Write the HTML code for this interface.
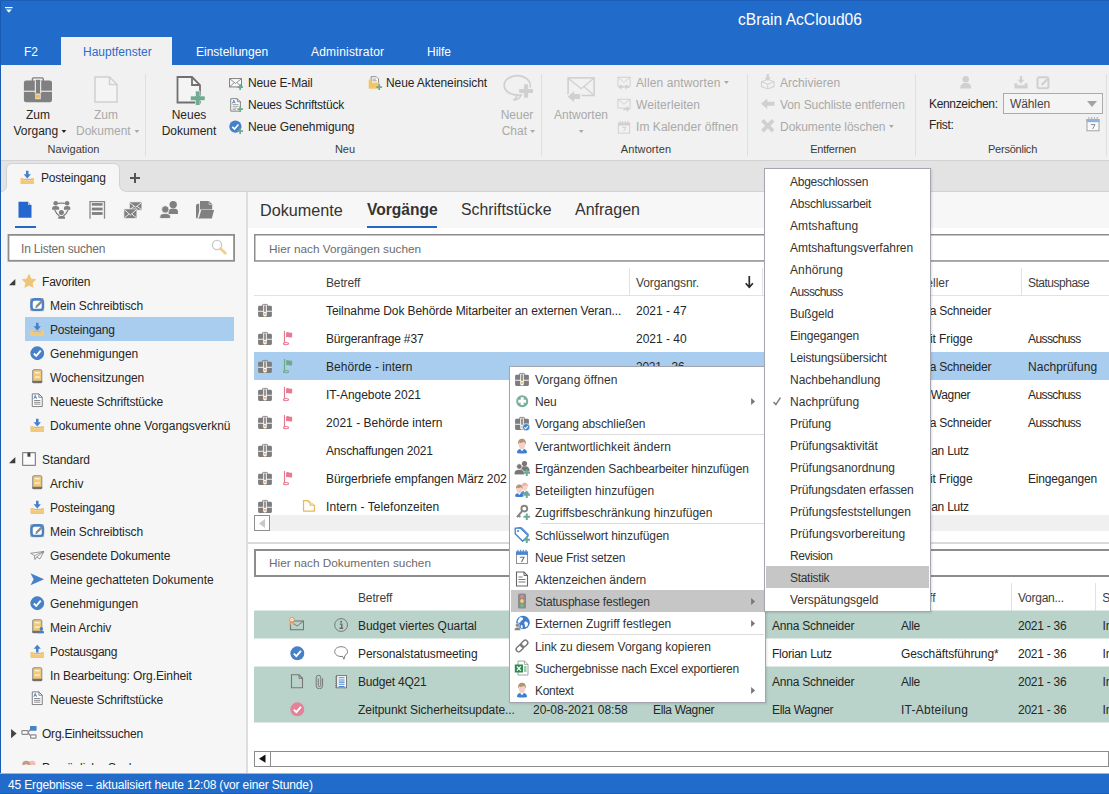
<!DOCTYPE html><html><head><meta charset="utf-8"><title>F2</title><style>
*{box-sizing:border-box;margin:0;padding:0}
html,body{width:1109px;height:794px;overflow:hidden;background:#fff}
body{font-family:"Liberation Sans",sans-serif;font-size:12px;color:#262626;position:relative}
.a{position:absolute;white-space:nowrap}
.t{position:absolute;white-space:nowrap;line-height:14px;height:14px}
.c{transform:translateX(-50%)}
.dis{color:#a9a9a9}
svg{position:absolute;overflow:visible}
.sep{position:absolute;width:1px;background:#dfdfdf;top:74px;height:82px}
.w{color:#fff}
svg.ar{position:static;display:inline-block;margin-left:3.500px}
</style></head><body><svg width="0" height="0" style="position:absolute"><defs><symbol id="brief" viewBox="0 0 16 16"><path d="M5.600 4V3q0-.6.6-.6h3.600q.6 0 .6.6V4" fill="none" stroke="#7d7d7d" stroke-width=".9"/><rect x="1.100" y="3.700" width="13.800" height="11.200" rx="1.300" fill="#7d7d7d"/><rect x="1.100" y="8.800" width="13.800" height=".9" fill="#fff"/><path d="M6.200 3.400h3.600v9.500q0 1.700-1.800 1.700t-1.800-1.700z" fill="#fbfbfb"/><rect x="7.200" y="3.500" width="1.600" height="6.300" fill="#7d7d7d"/><rect x="7" y="11" width="2" height="1.900" fill="#f4bf62"/></symbol><symbol id="briefcheck" viewBox="0 0 16 16"><path d="M5.600 4V3q0-.6.6-.6h3.600q.6 0 .6.6V4" fill="none" stroke="#7d7d7d" stroke-width=".9"/><rect x="1.100" y="3.700" width="13.800" height="11.200" rx="1.300" fill="#7d7d7d"/><rect x="1.100" y="8.800" width="13.800" height=".9" fill="#fff"/><path d="M6.200 3.400h3.600v9.500q0 1.700-1.800 1.700t-1.800-1.700z" fill="#fbfbfb"/><rect x="7.200" y="3.500" width="1.600" height="6.300" fill="#7d7d7d"/><rect x="7" y="11" width="2" height="1.900" fill="#f4bf62"/><circle cx="12.2" cy="12.2" r="3.6" fill="#4580c8" stroke="#fff" stroke-width=".6"/><path d="M10.4 12.3l1.3 1.3 2.3-2.6" stroke="#fff" stroke-width="1.1" fill="none"/></symbol><symbol id="briefbig" viewBox="0 0 30 28"><path d="M9.400 6V3q0-1.100 1.100-1.100h8.600q1.100 0 1.100 1.100V6" fill="#f1f1f1" stroke="#808080" stroke-width="1.400"/><rect x=".9" y="4.600" width="28.100" height="21.700" rx="2.200" fill="#808080"/><rect x=".9" y="14.700" width="28.100" height="1.100" fill="#f1f1f1"/><path d="M11.800 4.600h6.400V17.500h-6.400z" fill="#f1f1f1"/><rect x="12.900" y="3.800" width="4.200" height="13.700" fill="#808080"/><rect x="12.300" y="17.800" width="5.400" height="5.400" fill="#f1f1f1"/><rect x="13" y="18.400" width="4" height="4.200" fill="#f0bf68"/></symbol><symbol id="docbigdis" viewBox="0 0 24 27"><path d="M1 1h14.5L23 8.500V26H1z" fill="#f4f4f4" stroke="#d0d0d0" stroke-width="1.5"/><path d="M15.500 1V8.500H23" fill="none" stroke="#d0d0d0" stroke-width="1.5"/></symbol><symbol id="newdocbig" viewBox="0 0 30 29"><path d="M1.5 1h14.500L24 9V26.500H1.500z" fill="#f4f4f4" stroke="#707070" stroke-width="1.8"/><path d="M16 1V9H24" fill="none" stroke="#707070" stroke-width="1.8"/><path d="M19.500 15h4.500v5h5v4.500h-5v5h-4.500v-5h-5V20h5z" fill="#6fab92" stroke="#f1f1f1" stroke-width=".6"/></symbol><symbol id="mailplus" viewBox="0 0 16 16"><rect x=".7" y="3" width="13.600" height="9.500" fill="#fafafa" stroke="#707070" stroke-width="1"/><path d="M1 3.300l6.500 5.200 6.500-5.200M1 12.300l4.800-4.600M14 12.300L9.200 7.700" fill="none" stroke="#707070" stroke-width=".9"/><path d="M11.75 9.5h2v2.25h2.25v2h-2.25v2.25h-2v-2.25h-2.25v-2h2.25z" fill="#6fab92"/></symbol><symbol id="docplus" viewBox="0 0 16 16"><path d="M2 .8h7.500L13 4.300V15H2z" fill="#fff" stroke="#707070" stroke-width="1"/><path d="M9.500 .8V4.300H13" fill="none" stroke="#707070" stroke-width=".9"/><path d="M4 6.200L5.500 2.500 7 6.200M4.500 5h2" stroke="#4580c8" stroke-width="1" fill="none"/><path d="M4 7.500h7M4 9.500h7M4 11.500h5M4 13.300h4" stroke="#707070" stroke-width=".7"/><path d="M11.75 9.5h2v2.25h2.25v2h-2.25v2.25h-2v-2.25h-2.25v-2h2.25z" fill="#6fab92"/></symbol><symbol id="checkplus" viewBox="0 0 16 16"><circle cx="7.300" cy="7.500" r="7" fill="#4580c8"/><path d="M3.800 7.800l2.500 2.500 4.500-5.200" stroke="#fff" stroke-width="1.900" fill="none"/><path d="M11.75 9.5h2v2.25h2.25v2h-2.25v2.25h-2v-2.25h-2.25v-2h2.25z" fill="#6fab92"/></symbol><symbol id="folderplus" viewBox="0 0 16 16"><path d="M3.500 .8h6l2.500 2.500V10h-8.500z" fill="#fff" stroke="#707070" stroke-width=".9"/><path d="M5 3.500h4M5 5.500h5" stroke="#707070" stroke-width=".8"/><path d="M.8 4h2.500v3.500H13.500L12 14.500H.8z" fill="#f3c56b"/><path d="M11.75 9.5h2v2.25h2.25v2h-2.25v2.25h-2v-2.25h-2.25v-2h2.25z" fill="#6fab92"/></symbol><symbol id="chatbigdis" viewBox="0 0 32 30"><path d="M15 20.900c-.3 2.600-1.700 4.300-3.600 5.300 3.700 0 6.300-2 7.800-5.200" fill="none" stroke="#d0d0d0" stroke-width="1.700"/><ellipse cx="15.200" cy="11.300" rx="13" ry="9.700" fill="none" stroke="#d0d0d0" stroke-width="1.800"/><path d="M21.400 9.700h5.400v4.600h4.900v5.400h-4.900v4.600h-5.400v-4.600h-4.900v-5.400h4.900z" fill="#d0d0d0" stroke="#f1f1f1" stroke-width="1.300"/></symbol><symbol id="replybigdis" viewBox="0 0 33 28"><rect x="3.100" y="1.900" width="26" height="17.600" fill="none" stroke="#d0d0d0" stroke-width="1.600"/><path d="M3.600 2.400l12.500 10.300L28.600 2.400M18.800 10.500l9.800 8.500" fill="none" stroke="#d0d0d0" stroke-width="1.300"/><path d="M1.500 20.600l8.300-7.200v4h6v6.400h-6v4z" fill="#d0d0d0" stroke="#f1f1f1" stroke-width="1.400"/></symbol><symbol id="replyalldis" viewBox="0 0 16 16"><rect x="1" y="1.500" width="14" height="10" fill="none" stroke="#d0d0d0" stroke-width="1.100"/><path d="M1.300 1.800l6.700 5.400 6.700-5.400" fill="none" stroke="#d0d0d0" stroke-width="1"/><path d="M1 12.500l4-3.500v2.200h3v2.600H5V16zM7.500 12.500l4-3.500v2.200h3v2.600h-3V16z" fill="#d0d0d0" stroke="#f1f1f1" stroke-width=".5"/></symbol><symbol id="forwarddis" viewBox="0 0 16 16"><rect x="1" y="1.500" width="14" height="10" fill="none" stroke="#d0d0d0" stroke-width="1.100"/><path d="M1.300 1.800l6.700 5.400 6.700-5.400" fill="none" stroke="#d0d0d0" stroke-width="1"/><path d="M15.500 12.500l-4.500-3.800v2.400H7v2.800h4V16z" fill="#d0d0d0" stroke="#f1f1f1" stroke-width=".5"/></symbol><symbol id="caldis" viewBox="0 0 16 16"><rect x="1.500" y="3.500" width="13" height="11.500" fill="none" stroke="#d0d0d0" stroke-width="1.100"/><rect x="1.500" y="3.500" width="13" height="2.800" fill="#d0d0d0"/><path d="M3.500 1v3M6.500 1v3M9.500 1v3M12.500 1v3" stroke="#d0d0d0" stroke-width="1.200"/><path d="M6 8.500h4L7.500 13" fill="none" stroke="#d0d0d0" stroke-width="1.100"/></symbol><symbol id="archdis" viewBox="0 0 16 16"><path d="M8 5.500L1.500 8v5L8 15.500 14.500 13V8z" fill="none" stroke="#d0d0d0" stroke-width="1.100"/><path d="M1.500 8L8 10.500 14.500 8M8 10.500v5" fill="none" stroke="#d0d0d0" stroke-width="1"/><path d="M6.800 0h2.400v3.500h2L8 7 4.800 3.500h2z" fill="#d0d0d0"/></symbol><symbol id="leftarrdis" viewBox="0 0 16 16"><path d="M1 8l6.500-5.500v3.500H15v4H7.500v3.500z" fill="#d0d0d0"/></symbol><symbol id="xdis" viewBox="0 0 16 16"><path d="M2.500 2.500l11 11M13.500 2.500l-11 11" stroke="#d0d0d0" stroke-width="3.800"/></symbol><symbol id="persondis" viewBox="0 0 16 16"><circle cx="8" cy="4.500" r="3.800" fill="#d0d0d0"/><path d="M1.500 15.500c0-5 2.500-6.500 6.500-6.500s6.500 1.500 6.500 6.500z" fill="#d0d0d0"/></symbol><symbol id="traydis" viewBox="0 0 16 16"><path d="M.5 9.500h3.200v2.300h8.600V9.500h3.200V15.500H.5z" fill="#d0d0d0"/><path d="M6.800 1h2.400v4.500h2.600L8 9.800 4.200 5.500h2.600z" fill="#d0d0d0"/></symbol><symbol id="editdis" viewBox="0 0 16 16"><rect x="1.500" y="1.500" width="13" height="13" rx="2.500" fill="none" stroke="#d0d0d0" stroke-width="2.400"/><path d="M6.500 10.500l7-7" stroke="#d0d0d0" stroke-width="2.600"/></symbol><symbol id="calblue" viewBox="0 0 16 16"><rect x="2" y="3.500" width="12" height="11.300" fill="#fafafa" stroke="#9a9a9a" stroke-width=".9"/><rect x="1.500" y="3" width="13" height="3.200" fill="#8db3e2"/><path d="M3.800 1v2.600M6.600 1v2.600M9.400 1v2.600M12.200 1v2.600" stroke="#b5b5b5" stroke-width="1.100"/><path d="M5.800 8.600h4.200L7.600 13" fill="none" stroke="#8a8a8a" stroke-width="1"/></symbol><symbol id="calsm" viewBox="0 0 16 16"><rect x="2.500" y="3" width="11" height="11.500" fill="#fff" stroke="#858585" stroke-width=".9"/><rect x="2" y="2.600" width="12" height="3.300" fill="#4f86cf"/><path d="M4 .8v2.500M6.700 .8v2.500M9.300 .8v2.500M12 .8v2.500" stroke="#4f86cf" stroke-width="1.100"/><path d="M5.800 8.300h4.200L7.500 13" fill="none" stroke="#707070" stroke-width="1.100"/></symbol><symbol id="trayin" viewBox="0 0 16 16"><path d="M.5 8.800h3.400v2.400h8.200V8.800h3.400v6.700H.5z" fill="#f2c879"/><rect x="3.900" y="9.700" width="8.200" height="1.300" fill="#b9b9b9"/><path d="M6.600 .8h2.800v4h2.600L8 9.300 4 4.800h2.600z" fill="#4580c8"/></symbol><symbol id="trayout" viewBox="0 0 16 16"><path d="M.5 8.800h3.400v2.400h8.200V8.800h3.400v6.700H.5z" fill="#f2c879"/><rect x="3.900" y="9.700" width="8.200" height="1.300" fill="#b9b9b9"/><path d="M6.600 9.300h2.800V5.300h2.600L8 .8 4 5.300h2.600z" fill="#4580c8"/></symbol><symbol id="star" viewBox="0 0 16 16"><path d="M8 .9l2.200 4.800 5.100.6-3.800 3.600 1 5.100L8 12.500l-4.500 2.500 1-5.100L.7 6.300l5.100-.6z" fill="#f0c675" stroke="#f0c675" stroke-width="1.200" stroke-linejoin="round"/></symbol><symbol id="desk" viewBox="0 0 16 16"><rect x="1.600" y="2.600" width="12.800" height="11.800" rx="3.200" fill="#fff" stroke="#4a80c4" stroke-width="2.900"/><path d="M.8 1.800h3M.8 1.800v3M15.200 1.800h-3M15.200 15.200v-3M.8 15.200h3M.8 15.200v-3M15.200 15.200h-3" stroke="#9a9a9a" stroke-width=".8" fill="none"/><path d="M7 10.800l6.500-6.500" stroke="#8a8a8a" stroke-width="2.600"/><path d="M6 12l.6-2 1.500 1.500z" fill="#777"/></symbol><symbol id="checkblue" viewBox="0 0 16 16"><circle cx="8" cy="8" r="7.600" fill="#4580c8"/><path d="M4.200 8.300l2.700 2.700 5-5.800" stroke="#fff" stroke-width="2.100" fill="none"/></symbol><symbol id="checkpink" viewBox="0 0 16 16"><circle cx="8" cy="8" r="7.600" fill="#e6819a"/><path d="M4.200 8.300l2.700 2.700 5-5.800" stroke="#fff" stroke-width="2.100" fill="none"/></symbol><symbol id="archive" viewBox="0 0 16 16"><rect x="3" y=".8" width="10" height="14.400" rx="1.200" fill="#f2c879" stroke="#8a8a8a" stroke-width="1.100"/><rect x="2.500" y="13" width="11" height="2.600" rx=".9" fill="#707070"/><rect x="5.300" y="3.300" width="5.400" height="1.500" fill="#fdf4df"/><rect x="5.300" y="8.200" width="5.400" height="1.500" fill="#fdf4df"/></symbol><symbol id="archiveperson" viewBox="0 0 16 16"><rect x="3" y=".8" width="10" height="14.400" rx="1.200" fill="#f2c879" stroke="#8a8a8a" stroke-width="1.100"/><rect x="2.500" y="13" width="11" height="2.600" rx=".9" fill="#707070"/><rect x="5.300" y="3.300" width="5.400" height="1.500" fill="#fdf4df"/><rect x="5.300" y="8.200" width="5.400" height="1.500" fill="#fdf4df"/><circle cx="12.500" cy="10.800" r="1.900" fill="#4580c8"/><path d="M9.300 16c0-2.600 1.300-3.300 3.200-3.300s3.200.7 3.200 3.300z" fill="#4580c8"/></symbol><symbol id="doclines" viewBox="0 0 16 16"><path d="M2.500 1h7.300L13.500 4.700V15h-11z" fill="#fff" stroke="#707070" stroke-width="1"/><path d="M9.800 1V4.700H13.500" fill="none" stroke="#707070" stroke-width=".9"/><path d="M4.300 6.300L5.800 2.600 7.300 6.300M4.800 5.100h2" stroke="#4580c8" stroke-width="1" fill="none"/><path d="M4.500 8.300h7M4.500 10.300h7M4.500 12.300h7" stroke="#707070" stroke-width=".9"/></symbol><symbol id="stddoc" viewBox="0 0 16 16"><rect x=".8" y=".8" width="14.400" height="14.400" fill="#fcfcfc" stroke="#666" stroke-width="1.100"/><rect x="6.200" y=".8" width="3.400" height="4.600" fill="#444"/></symbol><symbol id="plane" viewBox="0 0 16 16"><path d="M.8 5.800L15.400 3.800 11 12 7.300 10 5.400 12.800 5 8.400z" fill="#fafafa" stroke="#808080" stroke-width=".9" stroke-linejoin="round"/><path d="M5 8.400L15.400 3.800 7.300 10" fill="none" stroke="#808080" stroke-width=".8"/></symbol><symbol id="bluearrow" viewBox="0 0 16 16"><path d="M.5 1.500L15.500 8 .5 14.500 4 8z" fill="#4580c8"/></symbol><symbol id="org" viewBox="0 0 16 14"><path d="M7 6l2.600-2.500M7 7l2.800 3" stroke="#8a8a8a" stroke-width="1.200" fill="none"/><rect x=".9" y="4.600" width="6.100" height="3.700" rx=".7" fill="#fff" stroke="#8a8a8a" stroke-width="1.200"/><rect x="9" y=".1" width="6.600" height="4.600" rx=".6" fill="#4a80c4"/><rect x="9.600" y="8.800" width="5.400" height="3.400" rx=".7" fill="#fff" stroke="#8a8a8a" stroke-width="1.200"/></symbol><symbol id="lusers2" viewBox="0 0 16 16"><circle cx="11.500" cy="4.800" r="3.900" fill="#f2bdb8"/><circle cx="4.800" cy="5.400" r="4.500" fill="#bd9f85"/><ellipse cx="4.800" cy="7.500" rx="2.600" ry="3" fill="#f6cfc6"/></symbol><symbol id="ldoc" viewBox="0 0 16 23"><path d="M.5 2.700h9.600L13.500 6.100V18.700H.5z" fill="#2467cf"/><path d="M10.100 2.700V6.100h3.400z" fill="#f6f6f6"/><path d="M10.600 3.900V5.600h1.700z" fill="#2467cf"/></symbol><symbol id="lpeople" viewBox="0 0 22 23"><path d="M8 4.400q3.400-.6 6.800 0M4.600 10.700q1.600 3.800 4.800 6.300M18.200 10.700q-1.600 3.800-4.800 6.300" stroke="#808080" stroke-width="1.200" fill="none"/><circle cx="5.7" cy="4.2" r="2.3" fill="#808080"/><path d="M2.1 10.7v-1.66q0-2.03 3.50-2.03t3.50 2.03v1.66q0 .01-.01 .01z" fill="#808080"/><circle cx="17.1" cy="4.2" r="2.3" fill="#808080"/><path d="M13.9 10.7v-1.66q0-2.03 3.20-2.03t3.20 2.03v1.66q0 .01-.01 .01z" fill="#808080"/><circle cx="11.4" cy="13.5" r="2.5" fill="#808080"/><path d="M8.3 19.7v-1.35q0-1.65 3.35-1.65t3.35 1.65v1.35q0 .01-.01 .01z" fill="#808080"/></symbol><symbol id="llist" viewBox="0 0 19 23"><path d="M2 19.700V2.600h14.500V19.700" fill="none" stroke="#8a8a8a" stroke-width="1.300"/><rect x="3.800" y="4.100" width="10.800" height="2.600" fill="#808080"/><rect x="3.800" y="8.600" width="10.800" height="2.800" fill="#808080"/><rect x="3.800" y="13.100" width="10.800" height="2.800" fill="#808080"/></symbol><symbol id="lmail" viewBox="0 0 22 23"><rect x="7.3" y="2.9" width="12.6" height="8.3" fill="#808080" stroke="#f6f6f6" stroke-width=".7"/><path d="M7.8 3.7l5.8 4.565 5.8-4.565M7.8 10.600000000000001l4.409999999999999-3.3200000000000003M19.4 10.600000000000001l-4.409999999999999-3.3200000000000003" stroke="#f6f6f6" stroke-width=".9" fill="none"/><rect x="1.9" y="9.9" width="13" height="9.6" fill="#808080" stroke="#f6f6f6" stroke-width=".7"/><path d="M2.4 10.700000000000001l6.0 5.28 6.0-5.28M2.4 18.9l4.55-3.84M14.4 18.9l-4.55-3.84" stroke="#f6f6f6" stroke-width=".9" fill="none"/></symbol><symbol id="lusers" viewBox="0 0 22 23"><circle cx="15.2" cy="5.6" r="3.7" fill="#808080"/><path d="M10.5 15v-2.43q0-2.97 4.75-2.97t4.75 2.97v2.43q0 .01-.01 .01z" fill="#808080"/><g stroke="#f6f6f6" stroke-width=".8"><circle cx="7.3" cy="10.4" r="3.7" fill="#808080"/><path d="M1.9 19.5v-2.25q0-2.75 5.25-2.75t5.25 2.75v2.25q0 .01-.01 .01z" fill="#808080"/></g></symbol><symbol id="lfolder" viewBox="0 0 23 23"><path d="M7 2h8.800l3.400 3.400V10.500H7z" fill="#808080"/><path d="M15.800 2v3.400h3.400z" fill="#f6f6f6"/><path d="M16.300 2.500V5h2.500z" fill="#808080"/><path d="M6.200 4.700H5q-2 0-2 2V18q0 1.500 1.400 1.500L6.200 12z" fill="#808080"/><path d="M8.200 11h12.900L18.800 19.500H4.600q1.300-.3 1.600-1.500z" fill="#808080"/></symbol><symbol id="mag" viewBox="0 0 16 16"><circle cx="6" cy="6" r="4.600" fill="#fff" stroke="#c9c9c9" stroke-width="1.400"/><path d="M9.500 9.500l4.800 4.800" stroke="#f2cf8b" stroke-width="2.800" stroke-linecap="round"/></symbol><symbol id="flagr" viewBox="0 0 16 16"><path d="M1.500 .9V13" stroke="#e77a92" stroke-width="1.200"/><ellipse cx="3" cy="13.600" rx="2.600" ry="1.100" fill="none" stroke="#e77a92" stroke-width="1.100"/><path d="M3.100 2.400q1.500-.6 3 0t3 0V7.300q-1.500.6-3 0t-3 0z" fill="#e77a92"/></symbol><symbol id="flagg" viewBox="0 0 16 16"><path d="M1.500 .9V13" stroke="#6fa88c" stroke-width="1.200"/><ellipse cx="3" cy="13.600" rx="2.600" ry="1.100" fill="none" stroke="#6fa88c" stroke-width="1.100"/><path d="M3.100 2.400q1.500-.6 3 0t3 0V7.300q-1.500.6-3 0t-3 0z" fill="#6fa88c"/></symbol><symbol id="foldery" viewBox="0 0 16 16"><path d="M1.500 2.700H5.800L12.500 7.600V13.100H1.500z" fill="#fffdf8" stroke="#e8b860" stroke-width="1.200" stroke-linejoin="round"/><path d="M5.800 2.700Q8.600 4.400 8.400 7.200Q10.500 6.700 12.500 7.600" fill="#fffdf8" stroke="#e8b860" stroke-width="1.100"/></symbol><symbol id="mailperson" viewBox="0 0 16 16"><rect x="2.500" y="4" width="13" height="8.700" fill="none" stroke="#777" stroke-width="1.100"/><path d="M2.900 4.400l6.100 4.700 6.100-4.700" fill="none" stroke="#777" stroke-width="1"/><path d="M2.900 4.500L2 8M4.900 4.500l.9 3.500" stroke="#f0995a" stroke-width="1.200"/><circle cx="3.900" cy="2.700" r="2.200" fill="#fff" stroke="#f0995a" stroke-width="1.100"/><circle cx="3.900" cy="2.700" r=".8" fill="#f0995a"/></symbol><symbol id="info" viewBox="0 0 16 16"><circle cx="8.100" cy="8" r="6.400" fill="none" stroke="#777" stroke-width="1"/><circle cx="8.100" cy="4.800" r="1" fill="#6a6a6a"/><path d="M6.700 7.100h2.100v4M6.500 11.200h3.600" stroke="#6a6a6a" stroke-width="1.400" fill="none"/></symbol><symbol id="bubble" viewBox="0 0 16 16"><path d="M9.600 11.400c-.5.100-1 .100-1.500.100-3.600 0-6.400-2.200-6.400-4.900s2.800-4.900 6.400-4.900 6.400 2.200 6.400 4.900c0 1.600-1 3-2.500 3.900l-1.100 3.700z" fill="#fff" stroke="#777" stroke-width="1" stroke-linejoin="round"/></symbol><symbol id="docsm" viewBox="0 0 16 16"><path d="M2.500 1.800H10l3.500 3.500v9.500h-11z" fill="none" stroke="#777" stroke-width="1.100"/><path d="M10 1.800v3.500h3.500" fill="none" stroke="#777" stroke-width="1"/></symbol><symbol id="docsm2" viewBox="0 0 16 16"><path d="M2.500 1h7.500l3.500 3.500V15h-11z" fill="#fff" stroke="#666" stroke-width="1.100"/><path d="M10 1v3.500h3.500" fill="none" stroke="#666" stroke-width="1"/><path d="M4.500 6h4M4.500 8.500h7M4.500 11h7" stroke="#777" stroke-width="1"/></symbol><symbol id="clip" viewBox="0 0 16 16"><path d="M6.300 5.500v6.900a1.250 1.250 0 0 0 2.500 0V4.600a2.300 2.300 0 0 0-4.600 0v8a3.200 3.200 0 0 0 6.400 0V5.200" fill="none" stroke="#777" stroke-width="1"/></symbol><symbol id="doclist" viewBox="0 0 16 16"><rect x="3.600" y="2.600" width="9.900" height="12.200" fill="#fff" stroke="#777" stroke-width="1"/><path d="M5.600 4.800h6M5.600 6.950h6M5.600 9.100h6M5.600 11.250h6M5.600 13.400h6" stroke="#4a86d0" stroke-width="1.050"/><path d="M2 4h2.200M2 6.100h2.200M2 8.200h2.200M2 10.300h2.200M2 12.400h2.200M2 14.200h2.200" stroke="#777" stroke-width=".8"/></symbol><symbol id="plusgreen" viewBox="0 0 16 16"><circle cx="8.200" cy="8.200" r="6" fill="#78b09a"/><path d="M6.700 4.300h3v2.400h2.400v3H9.700v2.400h-3V9.700H4.300v-3h2.400z" fill="#fff"/></symbol><symbol id="persona" viewBox="0 0 16 16"><g transform="translate(8 8.3) scale(1)"><path d="M-5 6.700c0-3.200 2-4.200 5-4.200s5 1 5 4.200q-5 1.200-10 0z" fill="#3f7fd0"/><path d="M-1.900 2.600L0 5 1.900 2.600z" fill="#fff"/><ellipse cx="0" cy="-1.300" rx="3.100" ry="3.900" fill="#f6cfc6"/><path d="M-3.700 -1.200c-1-4.600 1.300-6.300 3.700-6.300s4.700 1.700 3.700 6.300c-.3-1.700-1.100-2.700-2-3-1.400 .9-3.500 1.100-4.500 .4-.5 .7-.8 1.500-.9 2.600z" fill="#b39474"/></g></symbol><symbol id="personsplus" viewBox="0 0 16 16"><circle cx="10.5" cy="3.5" r="2.6" fill="#777"/><path d="M5.5600000000000005 11.56c0-3.9000000000000004 1.3-5.2 4.9399999999999995-5.2s4.9399999999999995 1.3 4.9399999999999995 5.2z" fill="#777"/><g stroke="#fff" stroke-width=".7"><circle cx="5.3" cy="6.5" r="2.7" fill="#777"/><path d="M0.16999999999999993 14.870000000000001c0-4.050000000000001 1.35-5.4 5.13-5.4s5.13 1.35 5.13 5.4z" fill="#777"/></g><path d="M11.75 9.5h2v2.25h2.25v2h-2.25v2.25h-2v-2.25h-2.25v-2h2.25z" fill="#6fab92"/></symbol><symbol id="personsplus2" viewBox="0 0 16 16"><g transform="translate(10.8 6.7) scale(0.8)"><path d="M-5 6.700c0-3.200 2-4.200 5-4.200s5 1 5 4.200q-5 1.200-10 0z" fill="#5a8fd4"/><path d="M-1.900 2.600L0 5 1.900 2.600z" fill="#fff"/><ellipse cx="0" cy="-1.300" rx="3.100" ry="3.900" fill="#f8d5cc"/><path d="M-3.700 -1.200c-1-4.600 1.300-6.300 3.700-6.300s4.700 1.700 3.700 6.300c-.3-1.700-1.100-2.700-2-3-1.400 .9-3.500 1.100-4.500 .4-.5 .7-.8 1.500-.9 2.600z" fill="#f1b3a8"/></g><g transform="translate(5.3 8.8) scale(0.85)"><path d="M-5 6.700c0-3.200 2-4.200 5-4.200s5 1 5 4.200q-5 1.200-10 0z" fill="#3f7fd0"/><path d="M-1.900 2.600L0 5 1.900 2.600z" fill="#fff"/><ellipse cx="0" cy="-1.300" rx="3.100" ry="3.900" fill="#f6cfc6"/><path d="M-3.700 -1.200c-1-4.600 1.300-6.300 3.700-6.300s4.700 1.700 3.700 6.300c-.3-1.700-1.100-2.700-2-3-1.400 .9-3.500 1.100-4.500 .4-.5 .7-.8 1.500-.9 2.600z" fill="#b39474"/></g><path d="M11.75 9.5h2v2.25h2.25v2h-2.25v2.25h-2v-2.25h-2.25v-2h2.25z" fill="#6fab92"/></symbol><symbol id="personkey" viewBox="0 0 16 16"><circle cx="10.300" cy="4.600" r="2.900" fill="none" stroke="#858585" stroke-width="1.900"/><path d="M8.300 6.800L3 13.200M4.500 11.500l1.900 1.500" stroke="#858585" stroke-width="2" fill="none"/><path d="M11.75 9.5h2v2.25h2.25v2h-2.25v2.25h-2v-2.25h-2.25v-2h2.25z" fill="#6fab92"/></symbol><symbol id="tag" viewBox="0 0 16 16"><path d="M1.200 1.200h5.500l7.500 7.500-5.500 5.500L1.200 6.700z" fill="#fff" stroke="#3f7fd0" stroke-width="1.300" stroke-linejoin="round"/><path d="M3.500 .8h4.500l7 7" fill="none" stroke="#3f7fd0" stroke-width="1"/><circle cx="4" cy="4" r="1" fill="#3f7fd0"/><path d="M11.75 9.5h2v2.25h2.25v2h-2.25v2.25h-2v-2.25h-2.25v-2h2.25z" fill="#6fab92"/></symbol><symbol id="traffic" viewBox="0 0 16 16"><rect x="4" y=".5" width="8" height="15" rx="1.500" fill="#8b8b8b"/><circle cx="8" cy="3.600" r="1.900" fill="#f07c93"/><circle cx="8" cy="8" r="1.900" fill="#f4cf6a"/><circle cx="8" cy="12.400" r="1.900" fill="#7eb08f"/></symbol><symbol id="globe" viewBox="0 0 16 16"><circle cx="9" cy="7.500" r="6.800" fill="#3f7fd0"/><path d="M6 2.500c1.500-.5 3.500.2 3 1.700s-2.200 1-2.500 2.500S5 8 4 7.500 5 3 6 2.500zM11 6.500c1.500-.3 3.200.5 3 2.500s-1.500 3.500-2.500 3-.2-2-1-3 .5-2.500.5-2.500zM7.500 10c1 0 1.500 1.500 1 3s-1.800-.5-1.800-1.500.8-1.500.8-1.500z" fill="#fff"/><circle cx="3.500" cy="10.300" r="2" fill="#858585" stroke="#fff" stroke-width=".5"/><path d="M.3 15.500c0-2.600 1.200-3.300 3.200-3.300s3.200.7 3.200 3.300z" fill="#858585" stroke="#fff" stroke-width=".5"/></symbol><symbol id="link" viewBox="0 0 16 16"><g fill="none" stroke="#777" stroke-width="1.400" transform="rotate(-45 8 8)"><rect x=".8" y="5.500" width="8" height="5" rx="2.500"/><rect x="7.200" y="5.500" width="8" height="5" rx="2.500"/></g></symbol><symbol id="excel" viewBox="0 0 16 16"><path d="M4 1h6.500L14 4.500V15H4z" fill="#fff" stroke="#9a9a9a" stroke-width=".9"/><path d="M10.500 1v3.500H14" fill="none" stroke="#9a9a9a" stroke-width=".8"/><path d="M10 7h2.500M10 9h2.500M10 11h2.500" stroke="#3a9a5c" stroke-width="1.100"/><rect x=".8" y="4.500" width="8.200" height="8" fill="#2e8b50"/><path d="M3 6.300l3.800 4.400M6.800 6.300L3 10.700" stroke="#fff" stroke-width="1.300"/></symbol></defs></svg><div class="a" style="left:0px;top:0px;width:1109px;height:65px;background:#216ccb"></div>
<svg style="left:5.200px;top:6.900px" width="7.600" height="6" viewBox="0 0 7.600 6"><rect x="0" y="0" width="7.600" height="1.200" fill="#fff"/><path d="M1 2.500h5.800L3.900 5.800z" fill="#fff"/></svg>
<div class="t w" style="left:738px;top:13px;font-size:15.6px;line-height:18px;height:18px;top:11px">cBrain AcCloud06</div>
<div class="a" style="left:61px;top:37px;width:111px;height:28px;background:#f1f1f1"></div>
<div class="t w" style="left:24px;top:45px;">F2</div>
<div class="t " style="left:83px;top:45px;color:#2b6ccc">Hauptfenster</div>
<div class="t w" style="left:196px;top:45px;">Einstellungen</div>
<div class="t w" style="left:311px;top:45px;letter-spacing:0.2px">Administrator</div>
<div class="t w" style="left:427px;top:45px;">Hilfe</div>
<div class="a" style="left:0px;top:65px;width:1109px;height:96px;background:#f1f1f1;border-bottom:1px solid #d2d2d2"></div>
<div class="sep" style="left:145px"></div>
<div class="sep" style="left:541px"></div>
<div class="sep" style="left:747px"></div>
<div class="sep" style="left:915px"></div>
<div class="sep" style="left:1106px"></div>
<svg style="left:23px;top:76px" width="30" height="28"><use href="#briefbig"/></svg>
<div class="t c" style="left:38px;top:108px;">Zum</div>
<div class="t c" style="left:40px;top:124px;">Vorgang<svg class="ar" style="vertical-align:2.3px" width="4.800" height="3" viewBox="0 0 9 5.600"><path d="M0 0h9L4.500 5.600z" fill="currentColor"/></svg></div>
<svg style="left:94px;top:76px" width="24" height="27"><use href="#docbigdis"/></svg>
<div class="t c dis" style="left:106px;top:108px;">Zum</div>
<div class="t c dis" style="left:107.5px;top:124px;">Dokument<svg class="ar" style="vertical-align:2.3px" width="4.800" height="3" viewBox="0 0 9 5.600"><path d="M0 0h9L4.500 5.600z" fill="currentColor"/></svg></div>
<div class="t c" style="left:73.5px;top:142px;font-size:11px;color:#3a3a3a">Navigation</div>
<svg style="left:176px;top:76px" width="30" height="29"><use href="#newdocbig"/></svg>
<div class="t c" style="left:189px;top:108px;">Neues</div>
<div class="t c" style="left:189px;top:124px;">Dokument</div>
<svg style="left:229px;top:75.5px" width="14" height="14"><use href="#mailplus"/></svg>
<div class="t " style="left:248px;top:76px;letter-spacing:-0.126px;">Neue E-Mail</div>
<svg style="left:229px;top:97.5px" width="14" height="14"><use href="#docplus"/></svg>
<div class="t " style="left:248px;top:98px;letter-spacing:-0.226px;">Neues Schriftstück</div>
<svg style="left:229px;top:119.5px" width="14" height="14"><use href="#checkplus"/></svg>
<div class="t " style="left:248px;top:120px;letter-spacing:-0.062px;">Neue Genehmigung</div>
<svg style="left:368px;top:75.5px" width="14" height="14"><use href="#folderplus"/></svg>
<div class="t " style="left:386px;top:76px;letter-spacing:-0.098px;">Neue Akteneinsicht</div>
<svg style="left:502px;top:74px" width="32" height="30"><use href="#chatbigdis"/></svg>
<div class="t c dis" style="left:517px;top:108px;">Neuer</div>
<div class="t c dis" style="left:518.5px;top:124px;">Chat<svg class="ar" style="vertical-align:2.3px" width="4.800" height="3" viewBox="0 0 9 5.600"><path d="M0 0h9L4.500 5.600z" fill="currentColor"/></svg></div>
<div class="t c" style="left:345px;top:142px;font-size:11px;color:#3a3a3a">Neu</div>
<svg style="left:565px;top:76px" width="33" height="28"><use href="#replybigdis"/></svg>
<div class="t c dis" style="left:581px;top:108px;">Antworten</div>
<div class="t c dis" style="left:579.7px;top:124px;"><svg class="ar" style="vertical-align:2px" width="4.800" height="3" viewBox="0 0 9 5.600"><path d="M0 0h9L4.500 5.600z" fill="currentColor"/></svg></div>
<svg style="left:617px;top:75.5px" width="14" height="14"><use href="#replyalldis"/></svg>
<div class="t dis" style="left:636px;top:76px;letter-spacing:0.118px;">Allen antworten<svg class="ar" style="vertical-align:3.5px" width="4.800" height="3" viewBox="0 0 9 5.600"><path d="M0 0h9L4.500 5.600z" fill="currentColor"/></svg></div>
<svg style="left:617px;top:97.5px" width="14" height="14"><use href="#forwarddis"/></svg>
<div class="t dis" style="left:636px;top:98px;letter-spacing:0.076px;">Weiterleiten</div>
<svg style="left:617px;top:119.5px" width="14" height="14"><use href="#caldis"/></svg>
<div class="t dis" style="left:636px;top:120px;letter-spacing:0.053px;">Im Kalender öffnen</div>
<div class="t c" style="left:646px;top:142px;font-size:11px;letter-spacing:.1px;color:#3a3a3a">Antworten</div>
<svg style="left:760.3px;top:74.3px" width="15.5" height="15.5"><use href="#archdis"/></svg>
<div class="t dis" style="left:780px;top:76px;letter-spacing:0.015px;">Archivieren</div>
<svg style="left:760.3px;top:96.3px" width="15.5" height="15.5"><use href="#leftarrdis"/></svg>
<div class="t dis" style="left:780px;top:98px;letter-spacing:-0.086px;">Von Suchliste entfernen</div>
<svg style="left:760.3px;top:118.3px" width="15.5" height="15.5"><use href="#xdis"/></svg>
<div class="t dis" style="left:780px;top:120px;letter-spacing:-0.037px;">Dokumente löschen<svg class="ar" style="vertical-align:3px" width="4.800" height="3" viewBox="0 0 9 5.600"><path d="M0 0h9L4.500 5.600z" fill="currentColor"/></svg></div>
<div class="t c" style="left:833px;top:142px;font-size:11px;letter-spacing:-.22px;color:#3a3a3a">Entfernen</div>
<svg style="left:959.3px;top:74.7px" width="13.5" height="14.5"><use href="#persondis"/></svg>
<svg style="left:1013.7px;top:75.3px" width="14" height="14"><use href="#traydis"/></svg>
<svg style="left:1036px;top:75.5px" width="14" height="13.5"><use href="#editdis"/></svg>
<div class="t " style="left:929px;top:97px;letter-spacing:-0.335px;">Kennzeichen:</div>
<div class="a" style="left:1003px;top:93px;width:100px;height:21px;background:#f4f4f4;border:1px solid #ababab"></div>
<div class="t " style="left:1010px;top:97px;letter-spacing:-0.103px;color:#444">Wählen</div>
<svg style="left:1087px;top:101px" width="10" height="6" viewBox="0 0 10 6"><path d="M0 0h10l-5 6z" fill="#a3a3a3"/></svg>
<div class="t " style="left:929px;top:118px;letter-spacing:-0.385px;">Frist:</div>
<svg style="left:1084.5px;top:116px" width="16" height="16"><use href="#calblue"/></svg>
<div class="t c" style="left:1012.5px;top:142px;font-size:11px;letter-spacing:-.23px;color:#3a3a3a">Persönlich</div>
<div class="a" style="left:0px;top:161px;width:1109px;height:31px;background:#e3e3e3"></div>
<svg style="left:0;top:161px" width="1109" height="31" viewBox="0 0 1109 31"><path d="M1 31V30.500Q6.500 30 6.500 24V8.500q0-6 6-6h101q6 0 6 6v14.500q0 7.500 8 7.500H1109V31z" fill="#f6f6f6"/><path d="M1 30.500Q6.500 30 6.500 24V8.500q0-6 6-6h101q6 0 6 6v14.500q0 7.500 8 7.500H1109" fill="none" stroke="#d2d2d2" stroke-width="1"/></svg>
<svg style="left:19.7px;top:170.2px" width="14.5" height="14.5"><use href="#trayin"/></svg>
<div class="t " style="left:41px;top:171px;letter-spacing:-0.185px;">Posteingang</div>
<svg style="left:130px;top:173px" width="10" height="10" viewBox="0 0 10 10"><path d="M5 0v10M0 5h10" stroke="#555" stroke-width="2"/></svg>
<div class="a" style="left:0px;top:192px;width:246px;height:581px;background:#f6f6f6"></div>
<div class="a" style="left:246px;top:192px;width:2px;height:581px;background:#dedede"></div>
<div class="a" style="left:248px;top:192px;width:861px;height:36px;background:#f7f7f7"></div>
<svg style="left:18px;top:199px" width="16" height="23"><use href="#ldoc"/></svg>
<svg style="left:50px;top:199px" width="22" height="23"><use href="#lpeople"/></svg>
<svg style="left:88px;top:199px" width="19" height="23"><use href="#llist"/></svg>
<svg style="left:122px;top:199px" width="22" height="23"><use href="#lmail"/></svg>
<svg style="left:158px;top:199px" width="22" height="23"><use href="#lusers"/></svg>
<svg style="left:193px;top:199px" width="23" height="23"><use href="#lfolder"/></svg>
<div class="a" style="left:15px;top:226px;width:21px;height:2px;background:#2169c9"></div>
<svg style="left:0;top:0" width="1109" height="794"><rect x="8.5" y="234.9" width="225.6" height="25.9" fill="#fff" stroke="#8d8d8d" stroke-width="1.8"/></svg>
<div class="t " style="left:21px;top:242px;color:#6b6b6b;letter-spacing:-.2px">In Listen suchen</div>
<svg style="left:210.5px;top:239px" width="16" height="16"><use href="#mag"/></svg>
<svg style="left:8.900px;top:278.5px" width="6.300" height="6.300" viewBox="0 0 7 7"><path d="M7 0v7H0z" fill="#3c3c3c"/></svg>
<svg style="left:22px;top:274.3px" width="14" height="14"><use href="#star"/></svg>
<div class="t " style="left:42px;top:275px;letter-spacing:-0.193px;">Favoriten</div>
<div class="a" style="left:25px;top:317px;width:209px;height:24px;background:#a9cdef"></div>
<svg style="left:29.75px;top:297.35px" width="14.5" height="14.5"><use href="#desk"/></svg>
<div class="t " style="left:50px;top:299px;letter-spacing:-0.096px;">Mein Schreibtisch</div>
<svg style="left:29.75px;top:321.85px" width="14.5" height="14.5"><use href="#trayin"/></svg>
<div class="t " style="left:50px;top:323px;letter-spacing:-0.185px;">Posteingang</div>
<svg style="left:29.75px;top:346.15px" width="14.5" height="14.5"><use href="#checkblue"/></svg>
<div class="t " style="left:50px;top:347px;letter-spacing:-0.038px;">Genehmigungen</div>
<svg style="left:29.75px;top:369.15px" width="14.5" height="14.5"><use href="#archive"/></svg>
<div class="t " style="left:50px;top:371px;letter-spacing:-0.064px;">Wochensitzungen</div>
<svg style="left:29.75px;top:393.15px" width="14.5" height="14.5"><use href="#doclines"/></svg>
<div class="t " style="left:50px;top:395px;letter-spacing:-0.177px;">Neueste Schriftstücke</div>
<svg style="left:29.75px;top:417.85px" width="14.5" height="14.5"><use href="#trayin"/></svg>
<div class="t " style="left:50px;top:419px;letter-spacing:-0.035px;">Dokumente ohne Vorgangsverknü</div>
<svg style="left:8.900px;top:456.5px" width="6.300" height="6.300" viewBox="0 0 7 7"><path d="M7 0v7H0z" fill="#3c3c3c"/></svg>
<svg style="left:22px;top:452.3px" width="14" height="14"><use href="#stddoc"/></svg>
<div class="t " style="left:42px;top:453px;letter-spacing:-0.104px;">Standard</div>
<svg style="left:29.75px;top:475.15px" width="14.5" height="14.5"><use href="#archive"/></svg>
<div class="t " style="left:50px;top:477px;letter-spacing:0.012px;">Archiv</div>
<svg style="left:29.75px;top:499.85px" width="14.5" height="14.5"><use href="#trayin"/></svg>
<div class="t " style="left:50px;top:501px;letter-spacing:-0.185px;">Posteingang</div>
<svg style="left:29.75px;top:523.35px" width="14.5" height="14.5"><use href="#desk"/></svg>
<div class="t " style="left:50px;top:525px;letter-spacing:-0.096px;">Mein Schreibtisch</div>
<svg style="left:29.75px;top:547.75px" width="14.5" height="14.5"><use href="#plane"/></svg>
<div class="t " style="left:50px;top:549px;letter-spacing:-0.169px;">Gesendete Dokumente</div>
<svg style="left:29.75px;top:572.45px" width="14.5" height="14.5"><use href="#bluearrow"/></svg>
<div class="t " style="left:50px;top:573px;letter-spacing:0.009px;">Meine gechatteten Dokumente</div>
<svg style="left:29.75px;top:596.15px" width="14.5" height="14.5"><use href="#checkblue"/></svg>
<div class="t " style="left:50px;top:597px;letter-spacing:-0.038px;">Genehmigungen</div>
<svg style="left:29.75px;top:619.15px" width="14.5" height="14.5"><use href="#archiveperson"/></svg>
<div class="t " style="left:50px;top:621px;letter-spacing:-0.068px;">Mein Archiv</div>
<svg style="left:29.75px;top:643.85px" width="14.5" height="14.5"><use href="#trayout"/></svg>
<div class="t " style="left:50px;top:645px;letter-spacing:-0.268px;">Postausgang</div>
<svg style="left:29.75px;top:667.15px" width="14.5" height="14.5"><use href="#archive"/></svg>
<div class="t " style="left:50px;top:669px;letter-spacing:-0.109px;">In Bearbeitung: Org.Einheit</div>
<svg style="left:29.75px;top:691.15px" width="14.5" height="14.5"><use href="#doclines"/></svg>
<div class="t " style="left:50px;top:693px;letter-spacing:-0.177px;">Neueste Schriftstücke</div>
<svg style="left:11px;top:729.4px" width="5.700" height="9.200" viewBox="0 0 6 10"><path d="M0 0l6 5-6 5z" fill="#444"/></svg>
<svg style="left:21px;top:726px" width="16" height="14"><use href="#org"/></svg>
<div class="t " style="left:42px;top:727px;letter-spacing:-0.215px;">Org.Einheitssuchen</div>
<div class="a" style="left:0;top:758px;width:246px;height:7.400px;overflow:hidden"><div class="a" style="left:0;top:-758px">
<svg style="left:8.900px;top:764.5px" width="6.300" height="6.300" viewBox="0 0 7 7"><path d="M7 0v7H0z" fill="#3c3c3c"/></svg>
<svg style="left:22px;top:760.3px" width="14" height="14"><use href="#lusers2"/></svg>
<div class="t " style="left:42px;top:761px;">Persönliche Suchen</div>
</div></div>
<div class="t " style="left:260px;top:203px;font-size:16.2px;line-height:20px;height:20px;top:200px;color:#333">Dokumente</div>
<div class="t " style="left:367px;top:203px;font-size:15.6px;font-weight:bold;line-height:20px;height:20px;top:200px;color:#333">Vorgänge</div>
<div class="t " style="left:461px;top:203px;font-size:15.8px;line-height:20px;height:20px;top:200px;color:#333">Schriftstücke</div>
<div class="t " style="left:575px;top:203px;font-size:16px;line-height:20px;height:20px;top:200px;color:#333">Anfragen</div>
<div class="a" style="left:367px;top:226px;width:70px;height:2px;background:#2169c9"></div>
<svg style="left:0;top:0" width="1109" height="794"><rect x="254.75" y="234.75" width="858.5" height="26.2" fill="#fff" stroke="#8d8d8d" stroke-width="1.5"/></svg>
<div class="t " style="left:269px;top:242px;color:#6b6b6b;font-size:11.8px">Hier nach Vorgängen suchen</div>
<div class="t " style="left:326px;top:276px;letter-spacing:-0.150px;color:#3d3d3d">Betreff</div>
<div class="t " style="left:636px;top:276px;letter-spacing:-0.091px;color:#3d3d3d">Vorgangsnr.</div>
<svg style="left:744.500px;top:276.300px" width="8.600" height="12.400" viewBox="0 0 8.600 12.400"><path d="M4.300 0v11M.7 7.300l3.600 4 3.600-4" stroke="#2a2a2a" stroke-width="1.700" fill="none"/></svg>
<div class="t " style="left:905px;top:276px;color:#3d3d3d">Ersteller</div>
<div class="t " style="left:1028px;top:276px;letter-spacing:-0.494px;color:#3d3d3d">Statusphase</div>
<div class="a" style="left:629px;top:268px;width:1px;height:28px;background:#e2e2e2"></div>
<div class="a" style="left:762px;top:268px;width:1px;height:28px;background:#e2e2e2"></div>
<div class="a" style="left:1021px;top:268px;width:1px;height:28px;background:#e2e2e2"></div>
<div class="a" style="left:254px;top:295px;width:855px;height:1px;background:#e2e2e2"></div>
<svg style="left:257px;top:302px" width="16" height="16"><use href="#brief"/></svg>
<div class="t " style="left:326px;top:304px;letter-spacing:-0.079px;">Teilnahme Dok Behörde Mitarbeiter an externen Veran...</div>
<div class="t " style="left:636px;top:304px;">2021 - 47</div>
<div class="t " style="left:909px;top:304px;letter-spacing:-0.223px;">Anna Schneider</div>
<div class="t " style="left:1028px;top:304px;"></div>
<svg style="left:257px;top:330px" width="16" height="16"><use href="#brief"/></svg>
<svg style="left:283px;top:330px" width="16" height="16"><use href="#flagr"/></svg>
<div class="t " style="left:326px;top:332px;letter-spacing:-0.156px;">Bürgeranfrage #37</div>
<div class="t " style="left:636px;top:332px;">2021 - 40</div>
<div class="t " style="left:909px;top:332px;letter-spacing:-0.093px;">Birgit Frigge</div>
<div class="t " style="left:1028px;top:332px;letter-spacing:-0.600px;">Ausschuss</div>
<div class="a" style="left:254px;top:352px;width:855px;height:28px;background:#a9cdef"></div>
<svg style="left:257px;top:358px" width="16" height="16"><use href="#brief"/></svg>
<svg style="left:283px;top:358px" width="16" height="16"><use href="#flagg"/></svg>
<div class="t " style="left:326px;top:360px;letter-spacing:0.028px;">Behörde - intern</div>
<div class="t " style="left:636px;top:360px;letter-spacing:-0.267px;">2021 - 36</div>
<div class="t " style="left:909px;top:360px;letter-spacing:-0.223px;">Anna Schneider</div>
<div class="t " style="left:1028px;top:360px;letter-spacing:0.036px;">Nachprüfung</div>
<svg style="left:257px;top:386px" width="16" height="16"><use href="#brief"/></svg>
<svg style="left:283px;top:386px" width="16" height="16"><use href="#flagr"/></svg>
<div class="t " style="left:326px;top:388px;letter-spacing:-0.029px;">IT-Angebote 2021</div>
<div class="t " style="left:636px;top:388px;">2021 - 35</div>
<div class="t " style="left:909px;top:388px;letter-spacing:-0.332px;">Ella Wagner</div>
<div class="t " style="left:1028px;top:388px;letter-spacing:-0.600px;">Ausschuss</div>
<svg style="left:257px;top:414px" width="16" height="16"><use href="#brief"/></svg>
<svg style="left:283px;top:414px" width="16" height="16"><use href="#flagr"/></svg>
<div class="t " style="left:326px;top:416px;letter-spacing:0.020px;">2021 - Behörde intern</div>
<div class="t " style="left:636px;top:416px;">2021 - 34</div>
<div class="t " style="left:909px;top:416px;letter-spacing:-0.223px;">Anna Schneider</div>
<div class="t " style="left:1028px;top:416px;letter-spacing:-0.600px;">Ausschuss</div>
<svg style="left:257px;top:442px" width="16" height="16"><use href="#brief"/></svg>
<div class="t " style="left:326px;top:444px;letter-spacing:-0.171px;">Anschaffungen 2021</div>
<div class="t " style="left:636px;top:444px;">2021 - 33</div>
<div class="t " style="left:909px;top:444px;letter-spacing:-0.236px;">Florian Lutz</div>
<div class="t " style="left:1028px;top:444px;"></div>
<svg style="left:257px;top:470px" width="16" height="16"><use href="#brief"/></svg>
<svg style="left:283px;top:470px" width="16" height="16"><use href="#flagr"/></svg>
<div class="t " style="left:326px;top:472px;letter-spacing:-0.067px;">Bürgerbriefe empfangen März 202</div>
<div class="t " style="left:636px;top:472px;">2021 - 32</div>
<div class="t " style="left:909px;top:472px;letter-spacing:-0.093px;">Birgit Frigge</div>
<div class="t " style="left:1028px;top:472px;letter-spacing:-0.166px;">Eingegangen</div>
<svg style="left:257px;top:498px" width="16" height="16"><use href="#brief"/></svg>
<svg style="left:302px;top:498px" width="16" height="16"><use href="#foldery"/></svg>
<div class="t " style="left:326px;top:500px;letter-spacing:0.067px;">Intern - Telefonzeiten</div>
<div class="t " style="left:636px;top:500px;">2021 - 31</div>
<div class="t " style="left:909px;top:500px;letter-spacing:-0.236px;">Florian Lutz</div>
<div class="t " style="left:1028px;top:500px;"></div>
<div class="a" style="left:254px;top:515px;width:855px;height:16px;background:#f0f0f0"></div>
<div class="a" style="left:254px;top:515px;width:16px;height:16px;background:#fff;border:1px solid #8f8f8f"></div>
<svg style="left:259px;top:518.5px" width="6" height="9" viewBox="0 0 6 9"><path d="M6 0v9L0 4.500z" fill="#c8c8c8"/></svg>
<div class="a" style="left:248px;top:542px;width:861px;height:2px;background:#d9d9d9"></div>
<svg style="left:0;top:0" width="1109" height="794"><rect x="255.0" y="550.0" width="858" height="26" fill="#fff" stroke="#8d8d8d" stroke-width="2"/></svg>
<div class="t " style="left:269px;top:556px;color:#6b6b6b;font-size:11.8px">Hier nach Dokumenten suchen</div>
<div class="t " style="left:358px;top:591px;letter-spacing:-0.150px;color:#3d3d3d">Betreff</div>
<div class="t " style="left:901px;top:591px;letter-spacing:0.140px;color:#3d3d3d">Zugriff</div>
<div class="t " style="left:1018px;top:591px;letter-spacing:-0.250px;color:#3d3d3d">Vorgan...</div>
<div class="t " style="left:1102.3px;top:591px;color:#3d3d3d">Status</div>
<div class="a" style="left:1011px;top:583px;width:1px;height:28px;background:#e2e2e2"></div>
<div class="a" style="left:1095px;top:583px;width:1px;height:28px;background:#e2e2e2"></div>
<svg style="left:254px;top:0" width="855" height="794"><rect x="0" y="610.5" width="855" height="28" fill="#b9d3ca"/></svg>
<div class="t " style="left:358px;top:619px;letter-spacing:-0.030px;">Budget viertes Quartal</div>
<div class="t " style="left:533px;top:619px;"></div>
<div class="t " style="left:653px;top:619px;"></div>
<div class="t " style="left:772px;top:619px;letter-spacing:-0.223px;">Anna Schneider</div>
<div class="t " style="left:901px;top:619px;letter-spacing:-0.245px;">Alle</div>
<div class="t " style="left:1018px;top:619px;letter-spacing:-0.267px;">2021 - 36</div>
<div class="t " style="left:1102.5px;top:619px;">In</div>
<div class="t " style="left:358px;top:647px;letter-spacing:-0.125px;">Personalstatusmeeting</div>
<div class="t " style="left:533px;top:647px;"></div>
<div class="t " style="left:653px;top:647px;"></div>
<div class="t " style="left:772px;top:647px;letter-spacing:-0.236px;">Florian Lutz</div>
<div class="t " style="left:901px;top:647px;letter-spacing:-0.108px;">Geschäftsführung*</div>
<div class="t " style="left:1018px;top:647px;letter-spacing:-0.267px;">2021 - 36</div>
<div class="t " style="left:1102.5px;top:647px;">In</div>
<svg style="left:254px;top:0" width="855" height="794"><rect x="0" y="666.5" width="855" height="28.5" fill="#b9d3ca"/></svg>
<div class="t " style="left:358px;top:675px;letter-spacing:-0.205px;">Budget 4Q21</div>
<div class="t " style="left:533px;top:675px;"></div>
<div class="t " style="left:653px;top:675px;"></div>
<div class="t " style="left:772px;top:675px;letter-spacing:-0.223px;">Anna Schneider</div>
<div class="t " style="left:901px;top:675px;letter-spacing:-0.245px;">Alle</div>
<div class="t " style="left:1018px;top:675px;letter-spacing:-0.267px;">2021 - 36</div>
<div class="t " style="left:1102.5px;top:675px;">In</div>
<svg style="left:254px;top:0" width="855" height="794"><rect x="0" y="694.5" width="855" height="28" fill="#b9d3ca"/></svg>
<div class="t " style="left:358px;top:703px;letter-spacing:-0.063px;">Zeitpunkt Sicherheitsupdate...</div>
<div class="t " style="left:533px;top:703px;">20-08-2021 08:58</div>
<div class="t " style="left:653px;top:703px;letter-spacing:-0.332px;">Ella Wagner</div>
<div class="t " style="left:772px;top:703px;letter-spacing:-0.332px;">Ella Wagner</div>
<div class="t " style="left:901px;top:703px;letter-spacing:0.267px;">IT-Abteilung</div>
<div class="t " style="left:1018px;top:703px;letter-spacing:-0.267px;">2021 - 36</div>
<div class="t " style="left:1102.5px;top:703px;">In</div>
<svg style="left:288px;top:616.7px" width="16" height="16"><use href="#mailperson"/></svg>
<svg style="left:333px;top:616.7px" width="16" height="16"><use href="#info"/></svg>
<svg style="left:289.65px;top:645.65px" width="14.7" height="14.7"><use href="#checkblue"/></svg>
<svg style="left:333px;top:644.7px" width="16" height="16"><use href="#bubble"/></svg>
<svg style="left:289px;top:672.7px" width="16" height="16"><use href="#docsm"/></svg>
<svg style="left:312px;top:672.7px" width="16" height="16"><use href="#clip"/></svg>
<svg style="left:333px;top:672.7px" width="16" height="16"><use href="#doclist"/></svg>
<svg style="left:289.65px;top:701.65px" width="14.7" height="14.7"><use href="#checkpink"/></svg>
<div class="a" style="left:254px;top:751px;width:855px;height:16px;background:#fff;border:1px solid #8c8c8c"></div>
<div class="a" style="left:254px;top:751px;width:17px;height:16px;background:#fff;border:1px solid #8c8c8c"></div>
<svg style="left:259px;top:754px" width="6.500" height="9.400" viewBox="0 0 7 9"><path d="M7 0v9L0 4.500z" fill="#111"/></svg>
<div class="a" style="left:0px;top:773px;width:1109px;height:1px;background:#a4b4cc"></div>
<div class="a" style="left:0px;top:774px;width:1109px;height:20px;background:#216ccb;border-bottom:1px solid #1b5cb0"></div>
<div class="t w" style="left:8px;top:778px;letter-spacing:-0.149px;">45 Ergebnisse – aktualisiert heute 12:08 (vor einer Stunde)</div>
<div class="a" style="left:0px;top:0px;width:1px;height:773px;background:#1a5ab3"></div>
<div class="a" style="left:0px;top:0px;width:1109px;height:1px;background:#1d5fb8"></div>
<div class="a" style="left:509px;top:366px;width:257px;height:337px;background:#fff;border:1px solid #a3a6ae;box-shadow:1px 1px 2px rgba(0,0,0,.12)"></div>
<div class="a" style="left:511px;top:590px;width:254px;height:22px;background:#c6c6c6"></div>
<svg style="left:514px;top:371px" width="16" height="16"><use href="#brief"/></svg>
<div class="t " style="left:535px;top:373px;letter-spacing:0.099px;color:#333">Vorgang öffnen</div>
<svg style="left:514px;top:393px" width="16" height="16"><use href="#plusgreen"/></svg>
<div class="t " style="left:535px;top:395px;letter-spacing:-0.170px;color:#333">Neu</div>
<svg style="left:751px;top:398px" width="4.200" height="7" viewBox="0 0 4 7"><path d="M0 0l4 3.5-4 3.5z" fill="#777"/></svg>
<svg style="left:514px;top:415px" width="16" height="16"><use href="#briefcheck"/></svg>
<div class="t " style="left:535px;top:417px;letter-spacing:-0.132px;color:#333">Vorgang abschließen</div>
<svg style="left:514px;top:438px" width="16" height="16"><use href="#persona"/></svg>
<div class="t " style="left:535px;top:440px;letter-spacing:0.051px;color:#333">Verantwortlichkeit ändern</div>
<svg style="left:514px;top:460px" width="16" height="16"><use href="#personsplus"/></svg>
<div class="t " style="left:535px;top:462px;letter-spacing:-0.119px;color:#333">Ergänzenden Sachbearbeiter hinzufügen</div>
<svg style="left:514px;top:482px" width="16" height="16"><use href="#personsplus2"/></svg>
<div class="t " style="left:535px;top:484px;letter-spacing:0.056px;color:#333">Beteiligten hinzufügen</div>
<svg style="left:514px;top:504px" width="16" height="16"><use href="#personkey"/></svg>
<div class="t " style="left:535px;top:506px;letter-spacing:0.008px;color:#333">Zugriffsbeschränkung hinzufügen</div>
<svg style="left:514px;top:527px" width="16" height="16"><use href="#tag"/></svg>
<div class="t " style="left:535px;top:529px;letter-spacing:-0.083px;color:#333">Schlüsselwort hinzufügen</div>
<svg style="left:514px;top:549px" width="16" height="16"><use href="#calsm"/></svg>
<div class="t " style="left:535px;top:551px;letter-spacing:-0.223px;color:#333">Neue Frist setzen</div>
<svg style="left:514px;top:571px" width="16" height="16"><use href="#docsm2"/></svg>
<div class="t " style="left:535px;top:573px;letter-spacing:-0.082px;color:#333">Aktenzeichen ändern</div>
<svg style="left:514px;top:593px" width="16" height="16"><use href="#traffic"/></svg>
<div class="t " style="left:535px;top:595px;letter-spacing:-0.189px;color:#333">Statusphase festlegen</div>
<svg style="left:751px;top:598px" width="4.200" height="7" viewBox="0 0 4 7"><path d="M0 0l4 3.5-4 3.5z" fill="#777"/></svg>
<svg style="left:514px;top:615px" width="16" height="16"><use href="#globe"/></svg>
<div class="t " style="left:535px;top:617px;letter-spacing:-0.037px;color:#333">Externen Zugriff festlegen</div>
<svg style="left:751px;top:620px" width="4.200" height="7" viewBox="0 0 4 7"><path d="M0 0l4 3.5-4 3.5z" fill="#777"/></svg>
<svg style="left:514px;top:638px" width="16" height="16"><use href="#link"/></svg>
<div class="t " style="left:535px;top:640px;letter-spacing:-0.052px;color:#333">Link zu diesem Vorgang kopieren</div>
<svg style="left:514px;top:660px" width="16" height="16"><use href="#excel"/></svg>
<div class="t " style="left:535px;top:662px;letter-spacing:-0.200px;color:#333">Suchergebnisse nach Excel exportieren</div>
<svg style="left:514px;top:682px" width="16" height="16"><use href="#persona"/></svg>
<div class="t " style="left:535px;top:684px;letter-spacing:-0.310px;color:#333">Kontext</div>
<svg style="left:751px;top:687px" width="4.200" height="7" viewBox="0 0 4 7"><path d="M0 0l4 3.5-4 3.5z" fill="#777"/></svg>
<div class="a" style="left:541px;top:434px;width:223px;height:1px;background:#dcdcdc"></div>
<div class="a" style="left:541px;top:523px;width:223px;height:1px;background:#dcdcdc"></div>
<div class="a" style="left:541px;top:634px;width:223px;height:1px;background:#dcdcdc"></div>
<div class="a" style="left:764px;top:168px;width:167px;height:444px;background:#fff;border:1px solid #a3a6ae;box-shadow:1px 1px 2px rgba(0,0,0,.12)"></div>
<div class="a" style="left:766px;top:566px;width:163px;height:22px;background:#c6c6c6"></div>
<div class="t " style="left:790px;top:175px;letter-spacing:-0.251px;color:#333">Abgeschlossen</div>
<div class="t " style="left:790px;top:197px;letter-spacing:-0.241px;color:#333">Abschlussarbeit</div>
<div class="t " style="left:790px;top:219px;letter-spacing:0.080px;color:#333">Amtshaftung</div>
<div class="t " style="left:790px;top:241px;letter-spacing:-0.045px;color:#333">Amtshaftungsverfahren</div>
<div class="t " style="left:790px;top:263px;letter-spacing:0.119px;color:#333">Anhörung</div>
<div class="t " style="left:790px;top:285px;letter-spacing:-0.600px;color:#333">Ausschuss</div>
<div class="t " style="left:790px;top:307px;letter-spacing:-0.187px;color:#333">Bußgeld</div>
<div class="t " style="left:790px;top:329px;letter-spacing:-0.166px;color:#333">Eingegangen</div>
<div class="t " style="left:790px;top:351px;letter-spacing:-0.196px;color:#333">Leistungsübersicht</div>
<div class="t " style="left:790px;top:373px;letter-spacing:-0.021px;color:#333">Nachbehandlung</div>
<div class="t " style="left:790px;top:395px;letter-spacing:0.036px;color:#333">Nachprüfung</div>
<div class="t " style="left:790px;top:417px;letter-spacing:-0.126px;color:#333">Prüfung</div>
<div class="t " style="left:790px;top:439px;letter-spacing:-0.061px;color:#333">Prüfungsaktivität</div>
<div class="t " style="left:790px;top:461px;letter-spacing:-0.028px;color:#333">Prüfungsanordnung</div>
<div class="t " style="left:790px;top:483px;letter-spacing:-0.174px;color:#333">Prüfungsdaten erfassen</div>
<div class="t " style="left:790px;top:505px;letter-spacing:-0.057px;color:#333">Prüfungsfeststellungen</div>
<div class="t " style="left:790px;top:527px;letter-spacing:0.018px;color:#333">Prüfungsvorbereitung</div>
<div class="t " style="left:790px;top:549px;letter-spacing:-0.435px;color:#333">Revision</div>
<div class="t " style="left:790px;top:571px;letter-spacing:-0.301px;color:#333">Statistik</div>
<div class="t " style="left:790px;top:593px;letter-spacing:-0.066px;color:#333">Verspätungsgeld</div>
<svg style="left:772.500px;top:396.500px" width="8" height="8.500" viewBox="0 0 8 8.500"><path d="M.6 5l2.300 2.600L7.400 .7" stroke="#7a7a7a" stroke-width="1.500" fill="none"/></svg></body></html>
